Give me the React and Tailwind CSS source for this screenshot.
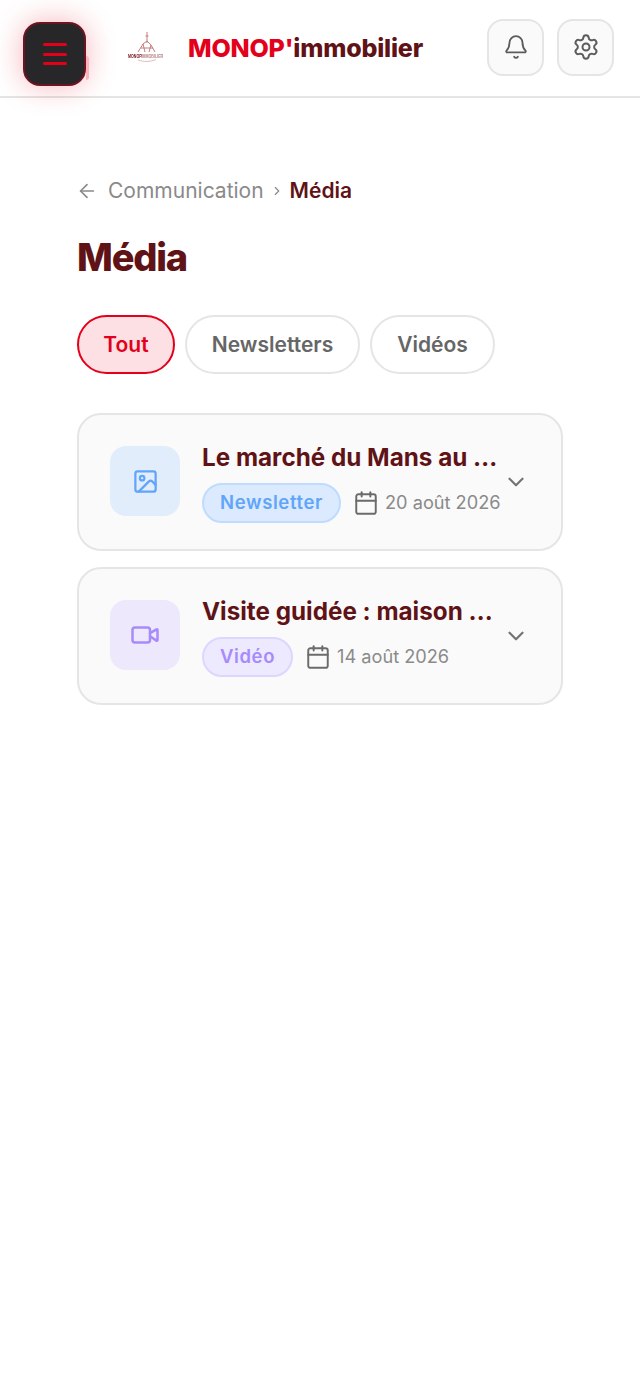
import { ArrowLeft, Bell, Calendar, ChevronDown, ChevronRight, Image, Settings, Video } from "lucide-react";

const items = [
  {
    title: "Le marché du Mans au …",
    tag: "Newsletter",
    date: "20 août 2026",
    Icon: Image,
    size: 27,
    box: "bg-[#e2edfb]",
    icon: "text-[#60a5fa]",
    badge: "bg-[#dbeafe] border-[#bfdbfe] text-[#60a5fa] w-[139px]",
  },
  {
    title: "Visite guidée : maison …",
    tag: "Vidéo",
    date: "14 août 2026",
    Icon: Video,
    size: 30,
    box: "bg-[#ede8fb]",
    icon: "text-[#a78bfa]",
    badge: "bg-[#ede9fe] border-[#ddd6fe] text-[#a78bfa] w-[91px]",
  },
];

function Logo() {
  return (
    <svg width="40" height="34" viewBox="0 0 40 34" fill="none" className="blur-[0.3px]">
      <defs>
        <linearGradient id="logoText" x1="0" x2="1" y1="0" y2="0">
          <stop offset="0.38" stopColor="#7c1a20" />
          <stop offset="0.42" stopColor="#b07f7f" />
        </linearGradient>
      </defs>
      <path d="M20 1V12M18.5 5H21.5M11 21L16 13L20 10L24 14L28 21M16 13L18 21M24 14L22 21M14 17H26" stroke="#c47c7c" strokeWidth="1" />
      <text transform="translate(1 27) scale(1 1.6)" fontSize="3.6" fontWeight="700" fontFamily="Liberation Sans, sans-serif" fill="url(#logoText)">
        MONOPIMMOBILIER
      </text>
      <path d="M11 29C17 31 23 31 29 28.5" stroke="#dba9a9" strokeWidth="0.8" />
    </svg>
  );
}

function MediaCard({ item }) {
  const { Icon } = item;
  return (
    <div className="h-[138px] rounded-[24px] border-2 border-[#e5e5e5] bg-[#fafafa] pl-[31px] pr-[32px] flex items-center">
      <div className={`w-[70px] h-[70px] -mt-[2px] rounded-[16px] flex items-center justify-center shrink-0 ${item.box}`}>
        <Icon size={item.size} strokeWidth={2} className={item.icon} />
      </div>
      <div className="ml-[22px] flex-1 min-w-0">
        <div className="text-[24.25px] leading-[32px] font-bold text-[#5f1316] whitespace-nowrap">{item.title}</div>
        <div className="mt-[9px] flex items-center">
          <span className={`h-[40px] rounded-full border-2 flex items-center justify-center text-[18.5px] font-semibold tracking-[0.6px] ${item.badge}`}>
            {item.tag}
          </span>
          <Calendar size={26} strokeWidth={1.8} className="ml-[12px] text-[#6b6b6b]" />
          <span className="ml-[6px] text-[18.2px] text-[#8a8a8a] whitespace-nowrap">{item.date}</span>
        </div>
      </div>
      <ChevronDown size={26} strokeWidth={2} className="text-[#737373] shrink-0" />
    </div>
  );
}

export default function App() {
  return (
    <div className="min-h-[1391px] bg-white font-['Inter',sans-serif]">
      {/* Header */}
      <header className="h-[98px] border-b-2 border-[#e5e5e5] flex items-center pl-[23px] pr-[26px]">
        <button className="relative w-[63px] h-[64px] mt-[12px] rounded-[17px] bg-[#27272a] border-2 border-[#6e1420] flex items-center justify-center shadow-[0_0_30px_rgba(227,0,27,0.3)]">
          <span className="flex flex-col gap-[6.5px]">
            <span className="block w-[24px] h-[3px] bg-[#e3001b] rounded-full" />
            <span className="block w-[24px] h-[3px] bg-[#e3001b] rounded-full" />
            <span className="block w-[24px] h-[3px] bg-[#e3001b] rounded-full" />
          </span>
          <span className="absolute -right-[5px] bottom-[4px] w-[3px] h-[24px] rounded-r-full bg-[#fbb4bd] blur-[0.5px]" />
        </button>
        <div className="ml-[41px]">
          <Logo />
        </div>
        <div className="ml-[21px] mt-[2px] text-[25px] font-extrabold tracking-[-0.2px] whitespace-nowrap">
          <span className="text-[#e3001b]">MONOP'</span>
          <span className="text-[#5f1316]">immobilier</span>
        </div>
        <div className="ml-auto flex gap-[13px] -mt-[2px]">
          <button className="w-[57px] h-[57px] rounded-[16px] border-2 border-[#e5e5e5] bg-[#fafafa] flex items-center justify-center">
            <Bell size={26} strokeWidth={1.7} className="text-[#5c5c5c]" />
          </button>
          <button className="w-[57px] h-[57px] rounded-[16px] border-2 border-[#e5e5e5] bg-[#fafafa] flex items-center justify-center">
            <Settings size={28} strokeWidth={1.7} className="text-[#5c5c5c]" />
          </button>
        </div>
      </header>

      <main className="px-[77px] pt-[78px]">
        {/* Breadcrumb */}
        <div className="h-[30px] flex items-center text-[21px]">
          <ArrowLeft size={22} strokeWidth={1.8} className="-ml-[1px] text-[#8a8a8a]" />
          <span className="ml-[10px] text-[#8a8a8a]">Communication</span>
          <ChevronRight size={14} strokeWidth={2} className="ml-[6px] text-[#8a8a8a]" />
          <span className="ml-[6px] font-semibold text-[#5f1316]">Média</span>
        </div>

        <h1 className="mt-[26px] text-[38px] leading-[50px] font-extrabold tracking-[-1.2px] text-[#5f1316]">Média</h1>

        {/* Filters */}
        <div className="mt-[33px] flex gap-[10px]">
          <button className="w-[98px] h-[59px] rounded-full border-2 border-[#e3001b] bg-[#fde0e3] text-[21px] font-semibold text-[#e3001b]">Tout</button>
          <button className="w-[175px] h-[59px] rounded-full border-2 border-[#e5e5e5] bg-white text-[21px] font-semibold text-[#666666]">Newsletters</button>
          <button className="w-[125px] h-[59px] rounded-full border-2 border-[#e5e5e5] bg-white text-[21px] font-semibold text-[#666666]">Vidéos</button>
        </div>

        {/* Cards */}
        <div className="mt-[39px] flex flex-col gap-[16px]">
          {items.map((item) => (
            <MediaCard key={item.tag} item={item} />
          ))}
        </div>
      </main>
    </div>
  );
}
